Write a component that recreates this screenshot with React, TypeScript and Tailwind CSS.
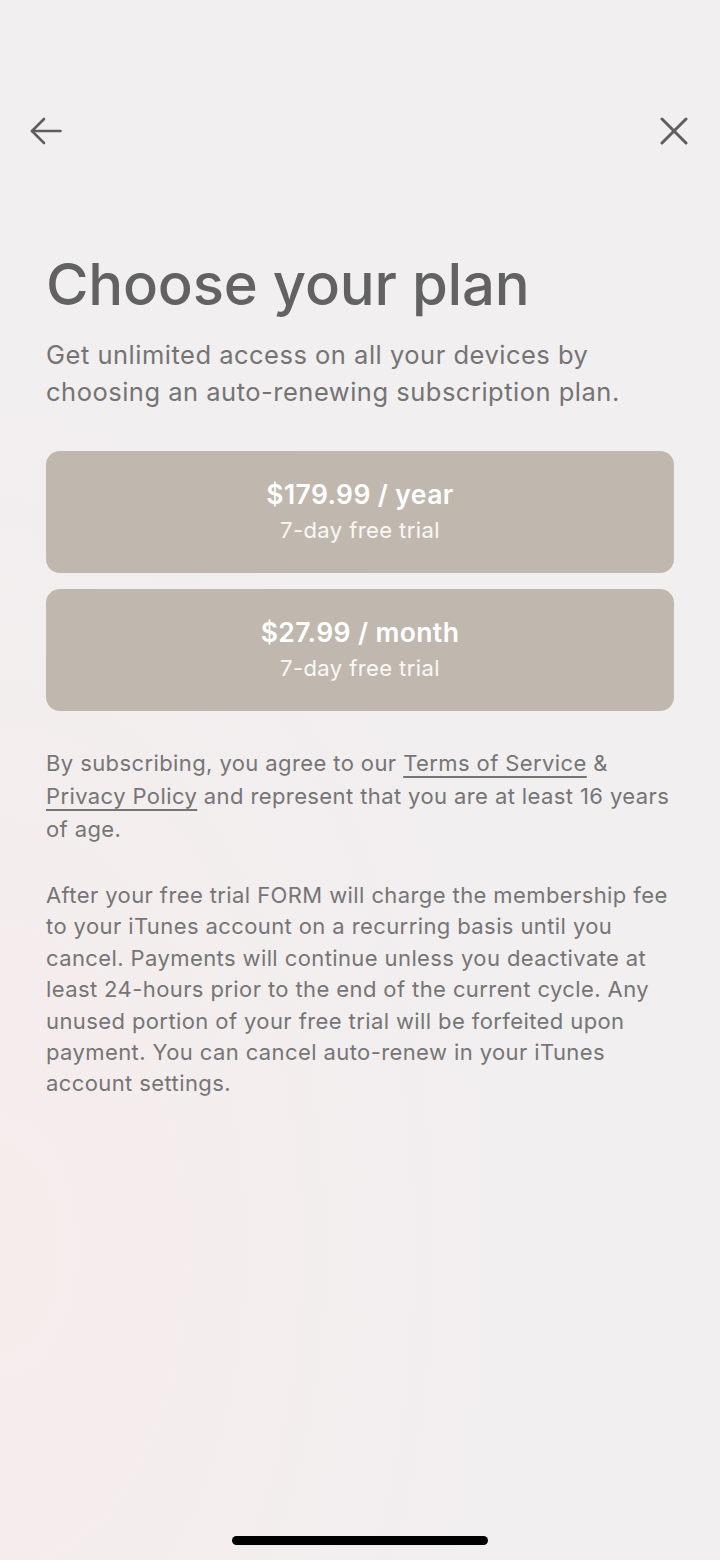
export default function App() {
  const plans = [
    { price: "$179.99 / year", note: "7-day free trial" },
    { price: "$27.99 / month", note: "7-day free trial" },
  ];

  return (
    <div
      className="relative w-[720px] h-[1560px] overflow-hidden bg-[#f1eff0] text-[#6e6d6e]"
      style={{ fontFamily: "Inter, 'Noto Sans', sans-serif" }}
    >
      {/* soft background tint */}
      <div className="absolute inset-0 bg-[radial-gradient(ellipse_at_0%_80%,#f6ecec_0%,transparent_55%)]" />

      <div className="relative flex flex-col">
        {/* Top nav */}
        <div className="flex items-center justify-between pt-[117px] pl-[30px] pr-[32px]">
          <button className="w-[32px] h-[28px] text-[#5f5e5f]">
            <svg width="32" height="28" viewBox="0 0 32 28" fill="none" stroke="currentColor" strokeWidth="2.6" strokeLinecap="round" strokeLinejoin="round">
              <path d="M30.5 14H2" />
              <path d="M14 2L2 14l12 12" />
            </svg>
          </button>
          <button className="w-[28px] h-[28px] text-[#5f5e5f]">
            <svg width="28" height="28" viewBox="0 0 28 28" fill="none" stroke="currentColor" strokeWidth="3" strokeLinecap="round">
              <path d="M2 2l24 24" />
              <path d="M26 2L2 26" />
            </svg>
          </button>
        </div>

        <div className="flex flex-col px-[46px]">
          {/* Heading */}
          <h1 className="mt-[107px] text-[58px] leading-[64px] font-medium tracking-[-0.2px] text-[#636263]">
            Choose your plan
          </h1>
          <p className="mt-[20px] text-[25.5px] leading-[37px] tracking-[0.5px] text-[#757475]">
            Get unlimited access on all your devices by choosing an auto-renewing subscription plan.
          </p>

          {/* Plans */}
          <div className="mt-[41px] flex flex-col gap-[16px]">
            {plans.map((p) => (
              <button
                key={p.price}
                className="h-[122px] rounded-[14px] bg-[#c0b8ae] flex flex-col items-center justify-center text-white"
              >
                <span className="text-[26.5px] leading-[36px] font-semibold tracking-[0.4px]">{p.price}</span>
                <span className="text-[22px] leading-[36px] tracking-[0.4px] text-white/90">{p.note}</span>
              </button>
            ))}
          </div>

          {/* Legal */}
          <p className="mt-[36px] text-[22px] leading-[33px] tracking-[0.4px] text-[#767576]">
            By subscribing, you agree to our{" "}
            <span className="underline underline-offset-[5px] decoration-[1.5px]">Terms of Service</span> &amp;{" "}
            <span className="underline underline-offset-[5px] decoration-[1.5px]">Privacy Policy</span> and represent that
            you are at least 16 years of age.
          </p>
          <p className="mt-[34px] text-[22px] leading-[31.4px] tracking-[0.4px] text-[#767576]">
            After your free trial FORM will charge the membership fee to your iTunes account on a recurring basis until you
            cancel. Payments will continue unless you deactivate at least 24-hours prior to the end of the current cycle.
            Any unused portion of your free trial will be forfeited upon payment. You can cancel auto-renew in your iTunes
            account settings.
          </p>
        </div>
      </div>

      {/* Home indicator */}
      <div className="absolute bottom-[15px] left-1/2 -translate-x-1/2 w-[256px] h-[9px] rounded-full bg-black" />
    </div>
  );
}
